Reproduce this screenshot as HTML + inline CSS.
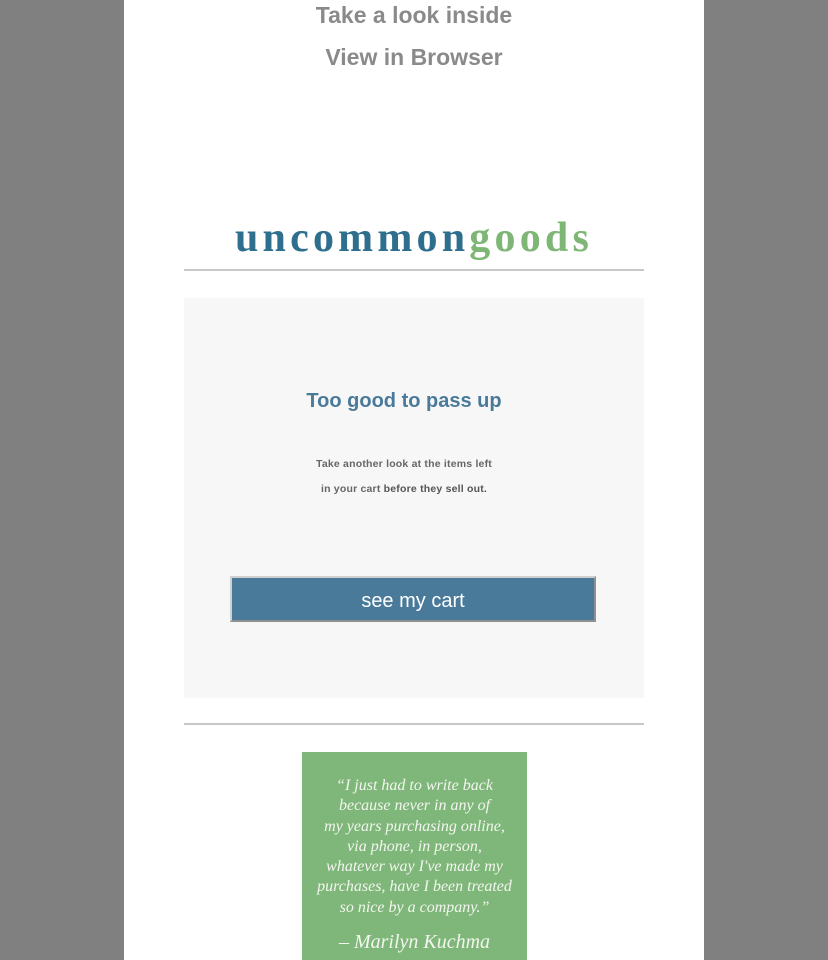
<!DOCTYPE html>
<html><head><style>
body{margin:0;background:#808080;width:828px;height:960px;overflow:hidden;font-family:"Liberation Sans",sans-serif}
.page{position:absolute;left:124px;top:0;width:580px;height:960px;background:#fff}
.t{position:absolute;width:580px;text-align:center;color:#8a8a8a;font-weight:bold;font-size:23px}
.hr{position:absolute;left:60px;width:460px;height:2px;background:#c8c8c8}
.box{position:absolute;left:60px;top:298px;width:460px;height:400px;background:#f7f7f7}
.btn{position:absolute;left:46px;top:278px;width:362px;height:42px;background:#4a7a9a;border:2px solid;border-color:#d0d0d0 #909090 #909090 #d0d0d0;color:#fff;font-size:20px;text-align:center;line-height:46px}
.q{position:absolute;left:178px;top:752px;width:225px;height:208px;background:#7fb679;color:#f2f6ee;font-family:"Liberation Serif",serif;font-style:italic;font-size:16px;line-height:20.3px;text-align:center}
</style></head><body><div class="page">
<div class="t" style="top:2px">Take a look inside</div>
<div class="t" style="top:44px">View in Browser</div>
<div style="position:absolute;left:60px;top:210px;width:460px;text-align:center;font-family:'Liberation Serif',serif;font-weight:bold;font-size:42px;letter-spacing:4.2px;line-height:56px"><span style="color:#2e6f8e">uncommon</span><span style="color:#7db675">goods</span></div>
<div class="hr" style="top:269px"></div>
<div class="box">
<div style="position:absolute;left:-10px;width:460px;top:92px;text-align:center;color:#4a7a9a;font-size:20px;font-weight:bold">Too good to pass up</div>
<div style="position:absolute;left:-10px;width:460px;top:154px;text-align:center;color:#666;font-size:10.5px;font-weight:bold;line-height:25px;letter-spacing:0.2px">Take another look at the items left<br>in your cart <b style="color:#555">before they sell out.</b></div>
<div class="btn">see my cart</div>
</div>
<div class="hr" style="top:723px"></div>
<div class="q"><div style="padding-top:24px">“I just had to write back<br>because never in any of<br>my years purchasing online,<br>via phone, in person,<br>whatever way I've made my<br>purchases, have I been treated<br>so nice by a company.”</div><div style="margin-top:14px;font-size:20px">– Marilyn Kuchma</div></div>
</div></body></html>
